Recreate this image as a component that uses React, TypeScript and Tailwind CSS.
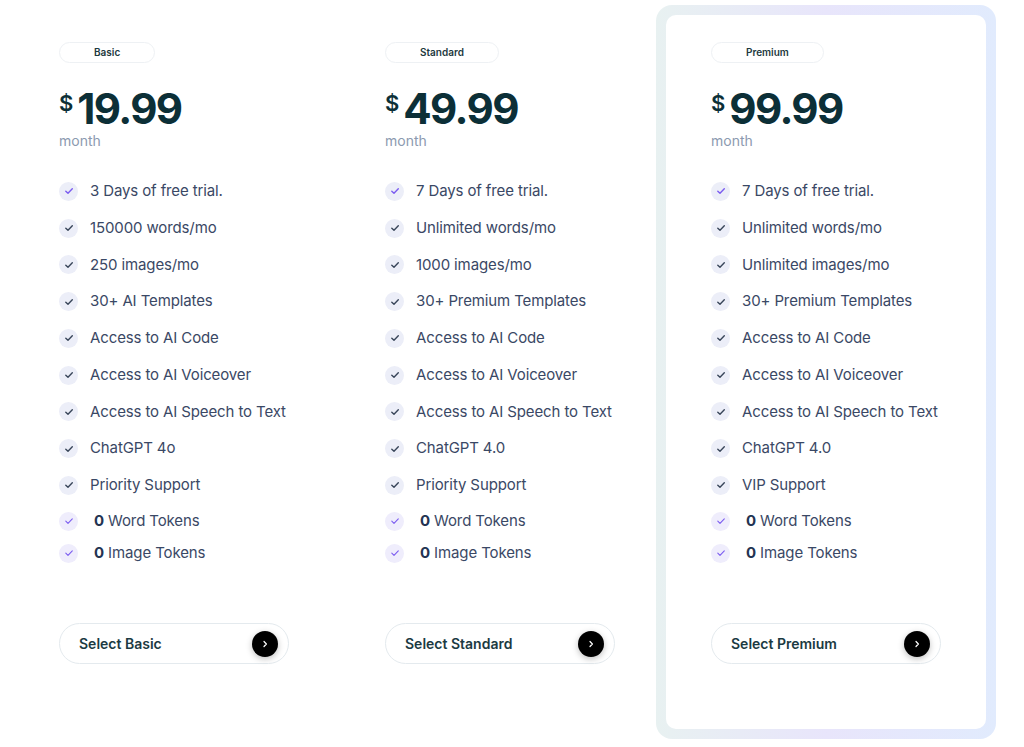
import React from "react";

type Plan = {
  name: string;
  price: string;
  features: string[];
  featured?: boolean;
};

const plans: Plan[] = [
  {
    name: "Basic",
    price: "19.99",
    features: [
      "3 Days of free trial.",
      "150000 words/mo",
      "250 images/mo",
      "30+ AI Templates",
      "Access to AI Code",
      "Access to AI Voiceover",
      "Access to AI Speech to Text",
      "ChatGPT 4o",
      "Priority Support",
    ],
  },
  {
    name: "Standard",
    price: "49.99",
    features: [
      "7 Days of free trial.",
      "Unlimited words/mo",
      "1000 images/mo",
      "30+ Premium Templates",
      "Access to AI Code",
      "Access to AI Voiceover",
      "Access to AI Speech to Text",
      "ChatGPT 4.0",
      "Priority Support",
    ],
  },
  {
    name: "Premium",
    price: "99.99",
    featured: true,
    features: [
      "7 Days of free trial.",
      "Unlimited words/mo",
      "Unlimited images/mo",
      "30+ Premium Templates",
      "Access to AI Code",
      "Access to AI Voiceover",
      "Access to AI Speech to Text",
      "ChatGPT 4.0",
      "VIP Support",
    ],
  },
];

function Check({ purple, light }: { purple?: boolean; light?: boolean }) {
  return (
    <span
      className={
        light
          ? "flex h-[19px] w-[19px] shrink-0 items-center justify-center rounded-full bg-[#efedfc]"
          : "flex h-[19px] w-[19px] shrink-0 items-center justify-center rounded-full bg-[#eceef8]"
      }
    >
      <svg width="10" height="10" viewBox="0 0 10 10" fill="none">
        <path
          d="M1.8 5.2 L4 7.3 L8.3 2.8"
          stroke={purple ? "#7b5cf0" : "#39465a"}
          strokeWidth={light ? 1.1 : 1.4}
          strokeLinecap="round"
          strokeLinejoin="round"
        />
      </svg>
    </span>
  );
}

function Card({ plan }: { plan: Plan }) {
  return (
    <div className="flex h-[714px] flex-col rounded-[10px] bg-white px-[45px] pt-[27px] pb-[65px]">
      <span className="flex h-[21px] items-center self-start rounded-full border border-[#eef1f4] px-[34px] text-[10px] font-semibold text-[#1d3940]">
        {plan.name}
      </span>

      <div className="mt-[25px] flex items-start text-[#0c2f37]">
        <span className="mt-[4px] text-[22px] font-semibold leading-none">$</span>
        <span className="ml-[4px] text-[42px] font-bold leading-none tracking-[-1.6px]">
          {plan.price}
        </span>
      </div>
      <p className="mt-[1px] text-[14px] leading-[20px] text-[#8c9ab0]">month</p>

      <ul className="mt-[22px] flex flex-col text-[15px] tracking-[-0.12px] whitespace-nowrap text-[#3a4865]">
        {plan.features.map((f, i) => (
          <li key={f} className="flex h-[36.75px] items-center gap-[12px]">
            <Check purple={i === 0} />
            <span>{f}</span>
          </li>
        ))}
        <li className="mt-[1.25px] flex h-[32px] items-center gap-[12px]">
          <Check purple light />
          <span className="ml-[4px]">
            <b className="font-bold text-[#233452]">0</b> Word Tokens
          </span>
        </li>
        <li className="flex h-[32px] items-center gap-[12px]">
          <Check purple light />
          <span className="ml-[4px]">
            <b className="font-bold text-[#233452]">0</b> Image Tokens
          </span>
        </li>
      </ul>

      <button className="mt-auto flex h-[41px] w-[230px] items-center justify-between rounded-full border border-[#e4eaee] bg-white pr-[10px] pl-[19px] text-[14px] font-semibold text-[#1b3a42]">
        <span>Select {plan.name}</span>
        <span className="flex h-[26px] w-[26px] items-center justify-center rounded-full bg-black shadow-[0_2px_6px_rgba(0,0,0,0.25)]">
          <svg width="8" height="8" viewBox="0 0 8 8" fill="none">
            <path d="M3 1.5 L5.4 4 L3 6.5" stroke="white" strokeWidth="1.2" strokeLinecap="round" strokeLinejoin="round" />
          </svg>
        </span>
      </button>
    </div>
  );
}

export default function App() {
  return (
    <div className="min-h-screen bg-white pt-[15px] pl-[14px] font-['Inter',sans-serif]">
      <div className="grid grid-cols-[320px_320px_320px] gap-x-[6px]">
        {plans.map((p) =>
          p.featured ? (
            <div
              key={p.name}
              className="-m-[10px] rounded-[16px] bg-gradient-to-r from-[#e8f1f1] via-[#e8e5fb] to-[#e1ebfd] p-[10px]"
            >
              <Card plan={p} />
            </div>
          ) : (
            <Card key={p.name} plan={p} />
          )
        )}
      </div>
    </div>
  );
}
